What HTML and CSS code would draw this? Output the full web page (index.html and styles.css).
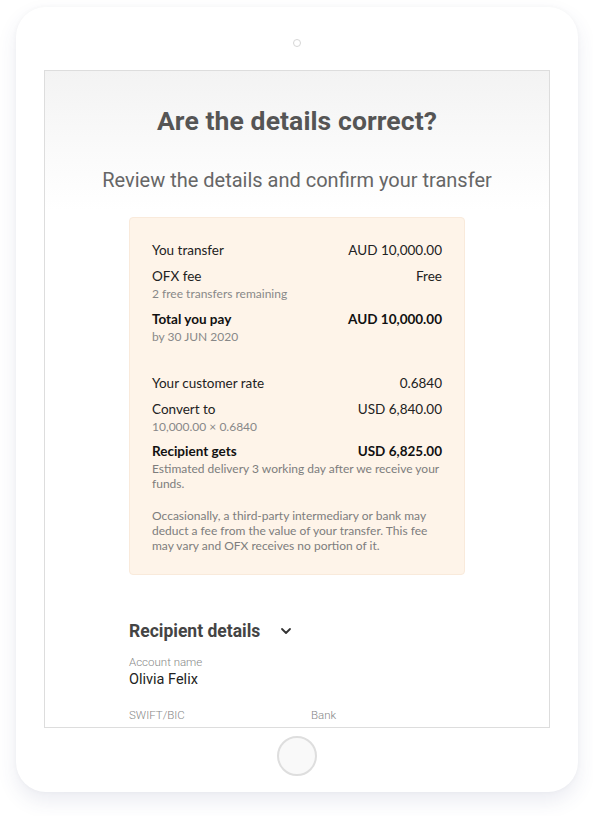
FILE: index.html
```html
<!DOCTYPE html>
<html lang="en">
<head>
<meta charset="utf-8">
<title>Are the details correct?</title>
<link rel="stylesheet" href="styles.css">
</head>
<body>
<div class="device">
  <div class="camera"></div>
  <div class="screen">
    <h1 class="title">Are the details correct?</h1>
    <p class="subtitle">Review the details and confirm your transfer</p>

    <div class="card">
      <div class="group">
        <div class="row"><span>You transfer</span><span>AUD 10,000.00</span></div>
        <div class="item">
          <div class="row"><span>OFX fee</span><span>Free</span></div>
          <div class="sub">2 free transfers remaining</div>
        </div>
        <div class="item">
          <div class="row strong"><span>Total you pay</span><span>AUD 10,000.00</span></div>
          <div class="sub">by 30 JUN 2020</div>
        </div>
      </div>

      <div class="group second">
        <div class="row"><span>Your customer rate</span><span>0.6840</span></div>
        <div class="item">
          <div class="row"><span>Convert to</span><span>USD 6,840.00</span></div>
          <div class="sub">10,000.00 × 0.6840</div>
        </div>
        <div class="item tight">
          <div class="row strong"><span>Recipient gets</span><span>USD 6,825.00</span></div>
          <div class="note">Estimated delivery 3 working day after we receive your funds.</div>
        </div>
        <div class="note disclaimer">Occasionally, a third-party intermediary or bank may deduct a fee from the value of your transfer. This fee may vary and OFX receives no portion of it.</div>
      </div>
    </div>

    <div class="recipient">
      <div class="rec-head">
        <h2 class="rec-title">Recipient details</h2>
        <svg class="chevron" width="12" height="8" viewBox="0 0 12 8" aria-hidden="true">
          <path d="M2 2 L6 6 L10 2" fill="none" stroke="#333" stroke-width="1.8" stroke-linecap="round" stroke-linejoin="round"/>
        </svg>
      </div>
      <div class="field">
        <div class="label">Account name</div>
        <div class="value">Olivia Felix</div>
      </div>
      <div class="field-grid">
        <div class="label">SWIFT/BIC</div>
        <div class="label">Bank</div>
      </div>
    </div>
  </div>
  <div class="home"></div>
</div>
</body>
</html>
```

FILE: styles.css
```css
html, body {
  margin: 0;
  padding: 0;
  background: #ffffff;
}

body {
  font-family: Roboto, "Liberation Sans", sans-serif;
  width: 593px;
  height: 816px;
  overflow: hidden;
}

.device {
  margin: 7px 0 0 16px;
  width: 562px;
  height: 785px;
  box-sizing: border-box;
  border-radius: 30px;
  background: #ffffff;
  box-shadow: 0 9px 20px rgba(60, 72, 130, 0.10), 0 0 5px rgba(0, 0, 0, 0.035);
  display: flex;
  flex-direction: column;
  align-items: center;
}

.camera {
  margin-top: 32px;
  width: 8px;
  height: 8px;
  box-sizing: border-box;
  border: 1.5px solid #d6d6d6;
  border-radius: 50%;
}

.screen {
  margin-top: 23px;
  width: 506px;
  height: 658px;
  box-sizing: border-box;
  border: 1px solid #dddddd;
  background: linear-gradient(to bottom, #f3f3f3 0, #fbfbfb 90px, #ffffff 140px);
  overflow: hidden;
  padding-top: 35px;
}

.title {
  margin: 0;
  text-align: center;
  font-family: Roboto, "Liberation Sans", sans-serif;
  font-weight: 700;
  font-size: 26.5px;
  line-height: 30px;
  color: #555555;
  letter-spacing: 0.1px;
}

.subtitle {
  margin: 32px 0 0;
  text-align: center;
  font-family: Roboto, "Liberation Sans", sans-serif;
  font-weight: 400;
  font-size: 20px;
  line-height: 24px;
  color: #666666;
}

.card {
  margin: 25px auto 0;
  width: 336px;
  box-sizing: border-box;
  padding: 23px 22px 21px;
  background: #fef4e9;
  border: 1px solid #f9eadb;
  border-radius: 4px;
  font-family: Lato, "Open Sans", sans-serif;
  color: #222222;
}

.group {
  display: flex;
  flex-direction: column;
  gap: 8px;
}

.group.second {
  margin-top: 29px;
}

.row {
  display: flex;
  justify-content: space-between;
  font-size: 13.5px;
  line-height: 18px;
}

.row.strong {
  font-weight: 700;
  color: #111111;
}

.item {
  display: flex;
  flex-direction: column;
  gap: 1px;
}

.item.tight {
  margin-top: -1px;
}

.sub {
  font-size: 12px;
  line-height: 16px;
  color: #888888;
}

.note {
  font-size: 12px;
  line-height: 15px;
  color: #7d7d7d;
}

.disclaimer {
  margin-top: 9px;
}

.recipient {
  margin: 44px auto 0;
  width: 336px;
}

.rec-head {
  display: flex;
  align-items: center;
  gap: 20px;
  height: 24px;
}

.rec-title {
  margin: 0;
  font-family: Roboto, "Liberation Sans", sans-serif;
  font-weight: 700;
  font-size: 17.5px;
  line-height: 24px;
  color: #444444;
}

.chevron {
  display: block;
}

.field {
  margin-top: 11px;
}

.label {
  font-size: 11.5px;
  line-height: 16px;
  color: #888888;
  font-weight: 300;
}

.value {
  font-size: 14.5px;
  line-height: 20px;
  color: #222222;
}

.field-grid {
  margin-top: 17px;
  display: grid;
  grid-template-columns: 182px 1fr;
}

.home {
  margin-top: 8px;
  width: 40px;
  height: 40px;
  box-sizing: border-box;
  border: 2px solid #dedede;
  border-radius: 50%;
  background: #f9f9f9;
}
```
